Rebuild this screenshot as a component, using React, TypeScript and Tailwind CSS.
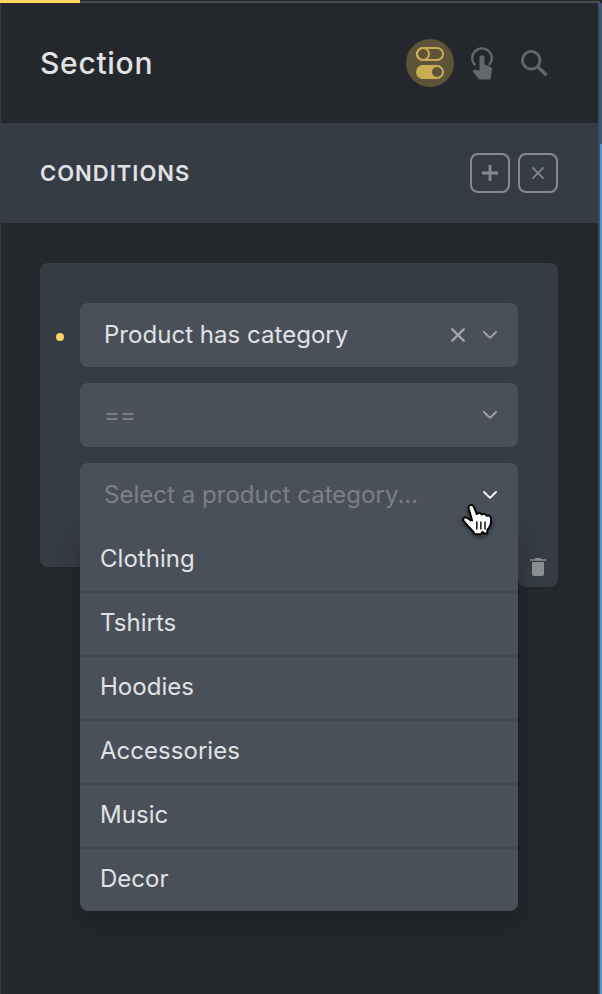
import type { ReactNode } from 'react';

const categories = ['Clothing', 'Tshirts', 'Hoodies', 'Accessories', 'Music', 'Decor'];

function TogglesIcon() {
  return (
    <svg width="28" height="32" viewBox="0 0 28 32" fill="none">
      <rect x="1" y="1" width="26" height="12" rx="6" stroke="#c9ad55" strokeWidth="2" />
      <circle cx="7" cy="7" r="6" stroke="#c9ad55" strokeWidth="2" />
      <rect y="18" width="28" height="14" rx="7" fill="#c9ad55" />
      <circle cx="21" cy="25" r="5" fill="#5c5338" />
    </svg>
  );
}

function TapIcon() {
  return (
    <svg width="24" height="34" viewBox="0 0 24 34" fill="none">
      <path d="M5.2 18.2A9.8 9.8 0 1 1 18.8 18.2" stroke="#64676b" strokeWidth="2.3" />
      <path
        d="M12 8.2c-1.5 0-2.5 1-2.5 2.4v13.2l-4.9-1.3-2 1.9 6.6 8.1h11.4l1.4-10c.1-1.2-.4-2-1.3-2.4l-6.2-2.6v-6.9c0-1.4-1-2.4-2.5-2.4z"
        fill="#64676b"
      />
    </svg>
  );
}

function SearchIcon() {
  return (
    <svg width="28" height="28" viewBox="0 0 28 28" fill="none" stroke="#64676b">
      <circle cx="10.2" cy="10.2" r="8.8" strokeWidth="2.8" />
      <path d="M16.3 16.3L25.6 25.2" strokeWidth="3.4" />
    </svg>
  );
}

function Chevron({ color }: { color: string }) {
  return (
    <svg width="14" height="8" viewBox="0 0 14 8" fill="none">
      <path d="M1 1l6 5.8L13 1" stroke={color} strokeWidth="1.8" strokeLinecap="round" strokeLinejoin="round" />
    </svg>
  );
}

function TrashIcon() {
  return (
    <svg width="16" height="18" viewBox="0 0 16 18" fill="#8b8f94">
      <path d="M0 1.2h4.5L5.3 0h5.4l.8 1.2H16v1.5H0z" />
      <path d="M2 4h12v12a2 2 0 0 1-2 2H4a2 2 0 0 1-2-2z" />
    </svg>
  );
}

function Pointer() {
  return (
    <svg width="34" height="36" viewBox="0 0 34 36" className="drop-shadow-[0_2px_2px_rgba(0,0,0,0.45)]">
      <path
        d="M8.5 2.2C10.2 1.7 11.4 2.6 12 4.2L14.8 11.1C16 9.6 18.8 9.8 19.7 11.6C21.3 10.3 24 10.8 24.6 12.9C26.7 11.9 29 13.2 29 15.8C29.3 20 28.5 23.8 25.4 26.6L25.2 30.4L21.6 30.4L20.5 28.8L18.9 31.1H12.8C11 27.5 8.2 25.4 5.4 22.4L1.6 17.8C.8 16 1.6 14.4 3.4 14.4C5 14.4 6.5 15.9 8.8 17.4L10.1 17.4L6.7 5.4C6.2 3.8 7 2.6 8.5 2.2Z"
        fill="white"
        stroke="black"
        strokeWidth="1.9"
        strokeLinejoin="round"
      />
      <path d="M14.8 18.5v8M18.9 18.5v8M23 18.5v8" stroke="black" strokeWidth="1.4" />
    </svg>
  );
}

function SelectBox({
  children,
  muted,
  open,
  icons,
}: {
  children: ReactNode;
  muted?: boolean;
  open?: boolean;
  icons: ReactNode;
}) {
  return (
    <div
      className={`flex h-16 items-center justify-between bg-[#495059] pr-[21px] pl-6 ${open ? 'rounded-t-lg' : 'rounded-lg'}`}
    >
      <span className={muted ? 'text-[#7b8087]' : 'text-[#e1e2e4]'}>{children}</span>
      <span className="flex items-center gap-[18px]">{icons}</span>
    </div>
  );
}

export default function App() {
  return (
    <div className="flex h-[994px] w-[602px] overflow-hidden bg-[#24272c] font-['Inter',sans-serif] text-2xl tracking-[0.03px]">
      <div className="flex w-[598px] flex-col">
        <div className="flex h-[3px]">
          <div className="w-20 bg-[#ffd65e]" />
          <div className="mt-px grow bg-[#454d57]" />
        </div>
        <div className="flex grow flex-col border-l border-[#363c44]">
          <header className="flex h-[120px] items-center justify-between pr-[49px] pl-[39px]">
            <h1 className="pt-0.5 text-[30px] font-medium tracking-[0.7px] text-[#e1e2e4]">Section</h1>
            <div className="flex items-center">
              <div className="flex size-12 items-center justify-center rounded-full bg-[#5c5338]">
                <TogglesIcon />
              </div>
              <div className="ml-4 pt-[2px]">
                <TapIcon />
              </div>
              <div className="ml-[27px] pt-[2px]">
                <SearchIcon />
              </div>
            </div>
          </header>
          <section className="flex h-[100px] items-center justify-between bg-[#363c44] pr-10 pl-[39px]">
            <h2 className="pt-0.5 text-[22px] font-semibold tracking-[1px] text-[#e1e2e4]">CONDITIONS</h2>
            <div className="flex gap-2">
              <button className="flex size-10 items-center justify-center rounded-lg border-2 border-[#868a8f]">
                <svg width="16" height="16" stroke="#868a8f" strokeWidth="2.8">
                  <path d="M0 8h16M8 0v16" />
                </svg>
              </button>
              <button className="flex size-10 items-center justify-center rounded-lg border-2 border-[#868a8f]">
                <svg width="12" height="12" stroke="#868a8f" strokeWidth="1.7">
                  <path d="M.5.5l11 11M11.5.5l-11 11" />
                </svg>
              </button>
            </div>
          </section>
          <main className="pt-10 pr-10 pl-[39px]">
            <div className="relative h-[304px] rounded-lg rounded-br-none bg-[#363c44] px-10 pt-10">
              <span className="absolute top-[70px] left-4 size-2 rounded-full bg-[#ffd65e]" />
              <div className="absolute top-[284px] right-0 flex h-10 w-10 items-center justify-center rounded-b-lg bg-[#363c44]">
                <TrashIcon />
              </div>
              <div className="relative flex flex-col gap-4">
                <SelectBox
                  icons={
                    <>
                      <svg width="14" height="14" stroke="#a0a4a9" strokeWidth="2.4" strokeLinecap="round">
                        <path d="M1.3 1.3l11.4 11.4M12.7 1.3L1.3 12.7" />
                      </svg>
                      <Chevron color="#a0a4a9" />
                    </>
                  }
                >
                  Product has category
                </SelectBox>
                <SelectBox muted icons={<Chevron color="#a0a4a9" />}>
                  ==
                </SelectBox>
                <SelectBox muted open icons={<Chevron color="#ffffff" />}>
                  Select a product category...
                </SelectBox>
                <ul className="absolute top-56 left-0 w-full rounded-b-lg bg-[#495059] text-[#e1e2e4] shadow-[0_12px_24px_rgba(0,0,0,0.22)]">
                  {categories.map((name) => (
                    <li
                      key={name}
                      className="flex h-16 items-center border-t-2 border-[#40474f] px-5 pb-0.5 first:border-t-0 first:pb-0"
                    >
                      {name}
                    </li>
                  ))}
                </ul>
                <div className="absolute top-[200px] left-[382px]">
                  <Pointer />
                </div>
              </div>
            </div>
          </main>
        </div>
      </div>
      <div className="mt-px w-0.5 bg-[#454d57]" />
      <div className="flex w-0.5 flex-col">
        <div className="mt-[3px] h-[141px] bg-[#34597f]" />
        <div className="grow bg-[#4299e1]" />
      </div>
    </div>
  );
}
